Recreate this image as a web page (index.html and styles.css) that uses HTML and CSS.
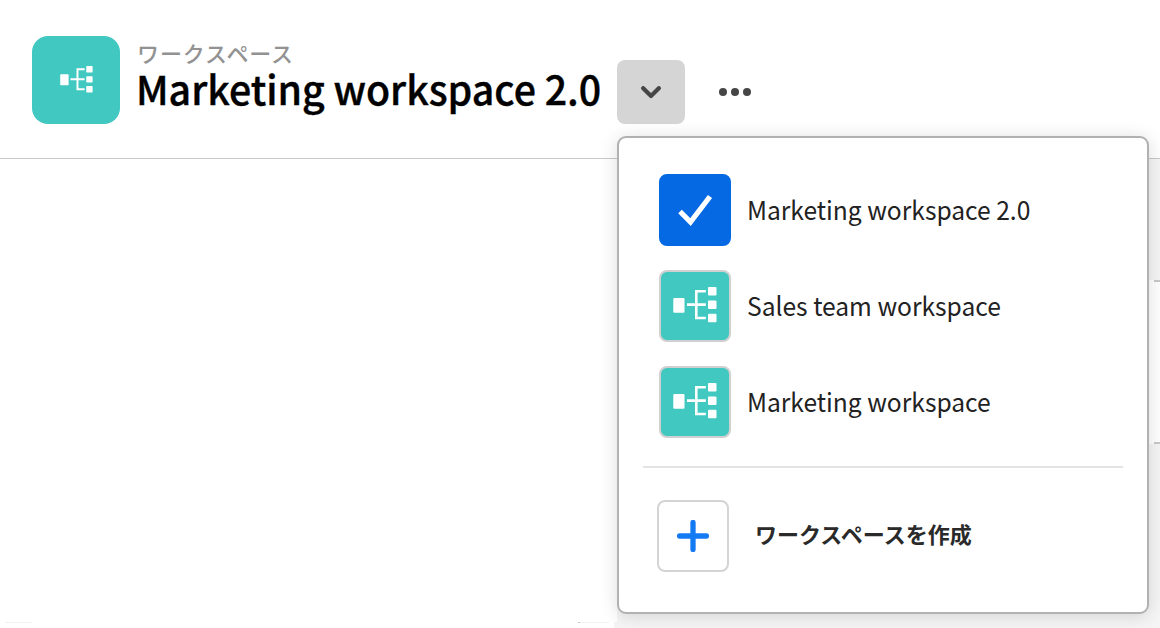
FILE: index.html
```html
<!DOCTYPE html>
<html lang="ja">
<head>
<meta charset="utf-8">
<title>Marketing workspace 2.0</title>
<link rel="stylesheet" href="styles.css">
</head>
<body>
<svg class="symbols" aria-hidden="true">
  <symbol id="tree" viewBox="0 0 44 36">
    <path fill="#fff" d="M1.300 11h9.200q1 0 1 1v12.800q0 1-1 1h-9.200q-1 0-1-1v-12.800q0-1 1-1zM36 0h6.500q1 0 1 1v6.500q0 1-1 1h-6.500q-1 0-1-1v-6.500q0-1 1-1zM36 13.500h6.500q1 0 1 1v6.500q0 1-1 1h-6.500q-1 0-1-1v-6.500q0-1 1-1zM36 26.800h6.500q1 0 1 1v6.500q0 1-1 1h-6.500q-1 0-1-1v-6.500q0-1 1-1z"/>
    <path fill="none" stroke="#fff" stroke-width="2.600" d="M14 17.600h18.800M32.800 4.200h-9.500v26.800h9.500"/>
  </symbol>
</svg>
<div class="app">
  <header class="header">
    <div class="logo"><svg class="logo-icon"><use href="#tree"/></svg></div>
    <div class="titles">
      <div class="kicker">ワークスペース</div>
      <h1 class="title">Marketing workspace 2.0</h1>
    </div>
    <button class="toggle" aria-label="ワークスペース"><svg width="20" height="13" viewBox="0 0 20 13"><path d="M2.200 2.200 10 10 17.800 2.200" fill="none" stroke="#464646" stroke-width="4.200" stroke-linecap="round" stroke-linejoin="round"/></svg></button>
    <div class="more"><i class="dot"></i><i class="dot"></i><i class="dot"></i></div>
  </header>
  <main class="main">
    <section class="canvas"><i class="edge"></i><i class="edge edge-end"></i></section>
    <aside class="side"><div class="card"><div class="card-body"></div></div></aside>
  </main>
  <nav class="menu">
    <div class="item">
      <span class="tile tile-selected"><svg width="36" height="32" viewBox="0 0 36 32"><path d="M3 17.500 13.500 28 33 2.500" fill="none" stroke="#fff" stroke-width="5.200"/></svg></span>
      <span class="label">Marketing workspace 2.0</span>
    </div>
    <div class="item">
      <span class="tile"><svg class="tile-icon"><use href="#tree"/></svg></span>
      <span class="label">Sales team workspace</span>
    </div>
    <div class="item">
      <span class="tile"><svg class="tile-icon"><use href="#tree"/></svg></span>
      <span class="label">Marketing workspace</span>
    </div>
    <div class="rule"></div>
    <div class="create">
      <span class="tile tile-add"><svg width="32" height="32" viewBox="0 0 32 32"><path d="M2.500 16h27M16 2.500v27" stroke="#147af3" stroke-width="5.300" stroke-linecap="round"/></svg></span>
      <span class="create-label">ワークスペースを作成</span>
    </div>
  </nav>
</div>
</body>
</html>
```
FILE: styles.css
```css
* { box-sizing: border-box; }
body { margin: 0; background: #fff; font-family: "Noto Sans CJK JP", "Noto Sans", sans-serif; }
.symbols { position: absolute; width: 0; height: 0; }
.app { position: relative; width: 1160px; height: 628px; overflow: hidden; display: flex; flex-direction: column; }
.header { height: 159px; flex: none; display: flex; align-items: flex-start; padding: 36px 0 0 32px; border-bottom: 1px solid #c8c8c8; }
.logo { width: 88px; height: 88px; flex: none; border-radius: 16px; background: #41c9c1; display: grid; place-items: center; }
.logo-icon { width: 33px; height: 27px; margin: -2px 0 0 1px; }
.titles { width: 480px; margin-left: 17px; padding-top: 4px; }
.kicker { height: 23px; font-size: 22px; line-height: 24px; letter-spacing: .9px; font-weight: 500; color: #929292; white-space: nowrap; }
.title { width: max-content; margin: 0 0 0 -1px; font-size: 40px; line-height: 50px; font-weight: 500; -webkit-text-stroke: .4px #000; color: #000; white-space: nowrap; transform: scaleX(.982); transform-origin: left; }
.toggle { width: 68px; height: 64px; flex: none; margin-top: 24px; padding: 0; border: 0; border-radius: 8px; background: #d5d5d5; display: grid; place-items: center; }
.more { display: flex; gap: 4px; margin: 52px 0 0 34px; }
.dot { width: 8px; height: 8px; border-radius: 50%; background: #464646; }
.main { flex: 1; display: flex; }
.canvas { width: 614px; display: flex; align-items: flex-end; justify-content: space-between; padding: 0 5px 5px; }
.edge { width: 27px; height: 1px; background: #f1f1f1; }
.edge-end { width: 31px; border-left: 2px solid #c8c8c8; }
.side { flex: 1; background: linear-gradient(#fff, #fff) 0 0 / 3px 463px no-repeat, #f5f5f5; padding: 121px 0 0 530px; }
.card { height: 164px; padding-left: 10px; background: #fff; }
.card-body { height: 164px; border: solid #c8c8c8; border-width: 2px 0; }
.menu { position: absolute; left: 617px; top: 136px; width: 532px; height: 478px; padding: 36px 24px 0; border: 2px solid #b1b1b1; border-radius: 9px; background: #fff; box-shadow: 0 2px 18px rgba(0, 0, 0, .14); }
.item { display: flex; align-items: center; height: 72px; margin: 0 0 24px 16px; gap: 16px; }
.tile { width: 72px; height: 72px; flex: none; border: 2px solid #d0d0d0; border-radius: 8px; background: #41c9c1; display: grid; place-items: center; }
.tile-selected { background: #0469e3; border-color: #0469e3; }
.tile-icon { width: 44px; height: 36px; margin-top: -2px; }
.label { padding-bottom: 2px; font-size: 26px; line-height: 40px; color: #222; white-space: nowrap; transform: scaleX(.946); transform-origin: left; }
.rule { height: 2px; background: #e3e3e3; margin-top: 28px; }
.create { display: flex; align-items: center; height: 72px; margin: 32px 0 0 14px; gap: 26px; }
.tile-add { background: #fff; border-color: #d4d4d4; }
.create-label { padding-bottom: 7px; font-size: 22px; line-height: 32px; font-weight: 700; color: #2a2a2a; white-space: nowrap; }
```
